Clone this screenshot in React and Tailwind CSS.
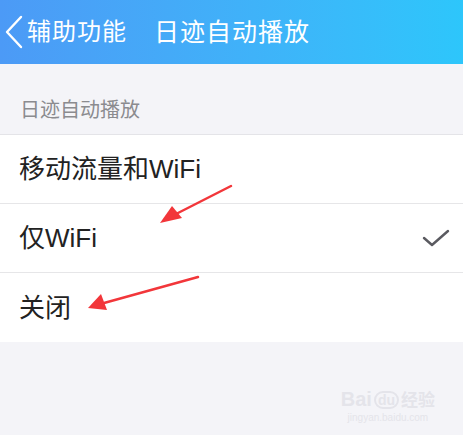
import { useState } from 'react'

const options = ['移动流量和WiFi', '仅WiFi', '关闭']

function App() {
  const [selected, setSelected] = useState(1)

  return (
    <div
      className="relative w-[463px] h-[435px] overflow-hidden bg-[#f4f4f8]"
      style={{ fontFamily: '"Liberation Sans", "Noto Sans CJK SC", sans-serif' }}
    >
      {/* Header */}
      <div className="h-[64px] flex items-center bg-gradient-to-r from-[#4c9af6] to-[#2dc6fb] text-white">
        <svg className="ml-[4px] w-[20px] h-[34px]" viewBox="0 0 20 34" fill="none" stroke="currentColor" strokeWidth="2.4" strokeLinecap="round" strokeLinejoin="round">
          <path d="M17 2 L3 17 L17 32" />
        </svg>
        <span className="ml-[3px] text-[24px] leading-none tracking-[1px]">辅助功能</span>
        <span className="ml-[27px] text-[25px] leading-none tracking-[1px]">日迹自动播放</span>
      </div>

      {/* Section label */}
      <div className="h-[71px] flex items-end pb-[14px] pl-[20px] border-b border-[#e4e4e8]">
        <span className="text-[20px] text-[#8b8b8f] leading-none">日迹自动播放</span>
      </div>

      {/* Options */}
      <div className="bg-white">
        {options.map((label, i) => (
          <div
            key={label}
            onClick={() => setSelected(i)}
            className={`h-[69px] flex items-center justify-between pl-[19px] pr-[12px] ${i < options.length - 1 ? 'border-b border-[#e6e6e8]' : ''}`}
          >
            <span className="text-[26px] text-[#222222] leading-none">{label}</span>
            {selected === i && (
              <svg className="w-[30px] h-[20px]" viewBox="0 0 30 20" fill="none" stroke="#5a5a60" strokeWidth="2.4" strokeLinecap="round" strokeLinejoin="round">
                <path d="M3 10 L11 17 L27 3" />
              </svg>
            )}
          </div>
        ))}
      </div>

      {/* Red annotation arrows */}
      <svg className="absolute inset-0 pointer-events-none" width="463" height="435" viewBox="0 0 463 435">
        <path d="M231 186 L176 214" stroke="#f2363a" strokeWidth="2.5" strokeLinecap="round" />
        <path d="M160 223 L172 206 L182 218 Z" fill="#f2363a" />
        <path d="M198 277 L104 303" stroke="#f2363a" strokeWidth="2.5" strokeLinecap="round" />
        <path d="M88 308 L101 294 L107 310 Z" fill="#f2363a" />
      </svg>

      {/* Watermark */}
      <div className="absolute right-[28px] bottom-[12px] flex flex-col items-center text-[#e4e4ea]">
        <div className="flex items-end gap-[2px] text-[20px] font-bold leading-none">
          <span>Bai</span>
          <span className="text-[14px] border-2 border-[#e4e4ea] rounded-full px-[2px]">du</span>
          <span className="text-[17px]">经验</span>
        </div>
        <span className="text-[10px] leading-none mt-[4px]">jingyan.baidu.com</span>
      </div>
    </div>
  )
}

export default App
